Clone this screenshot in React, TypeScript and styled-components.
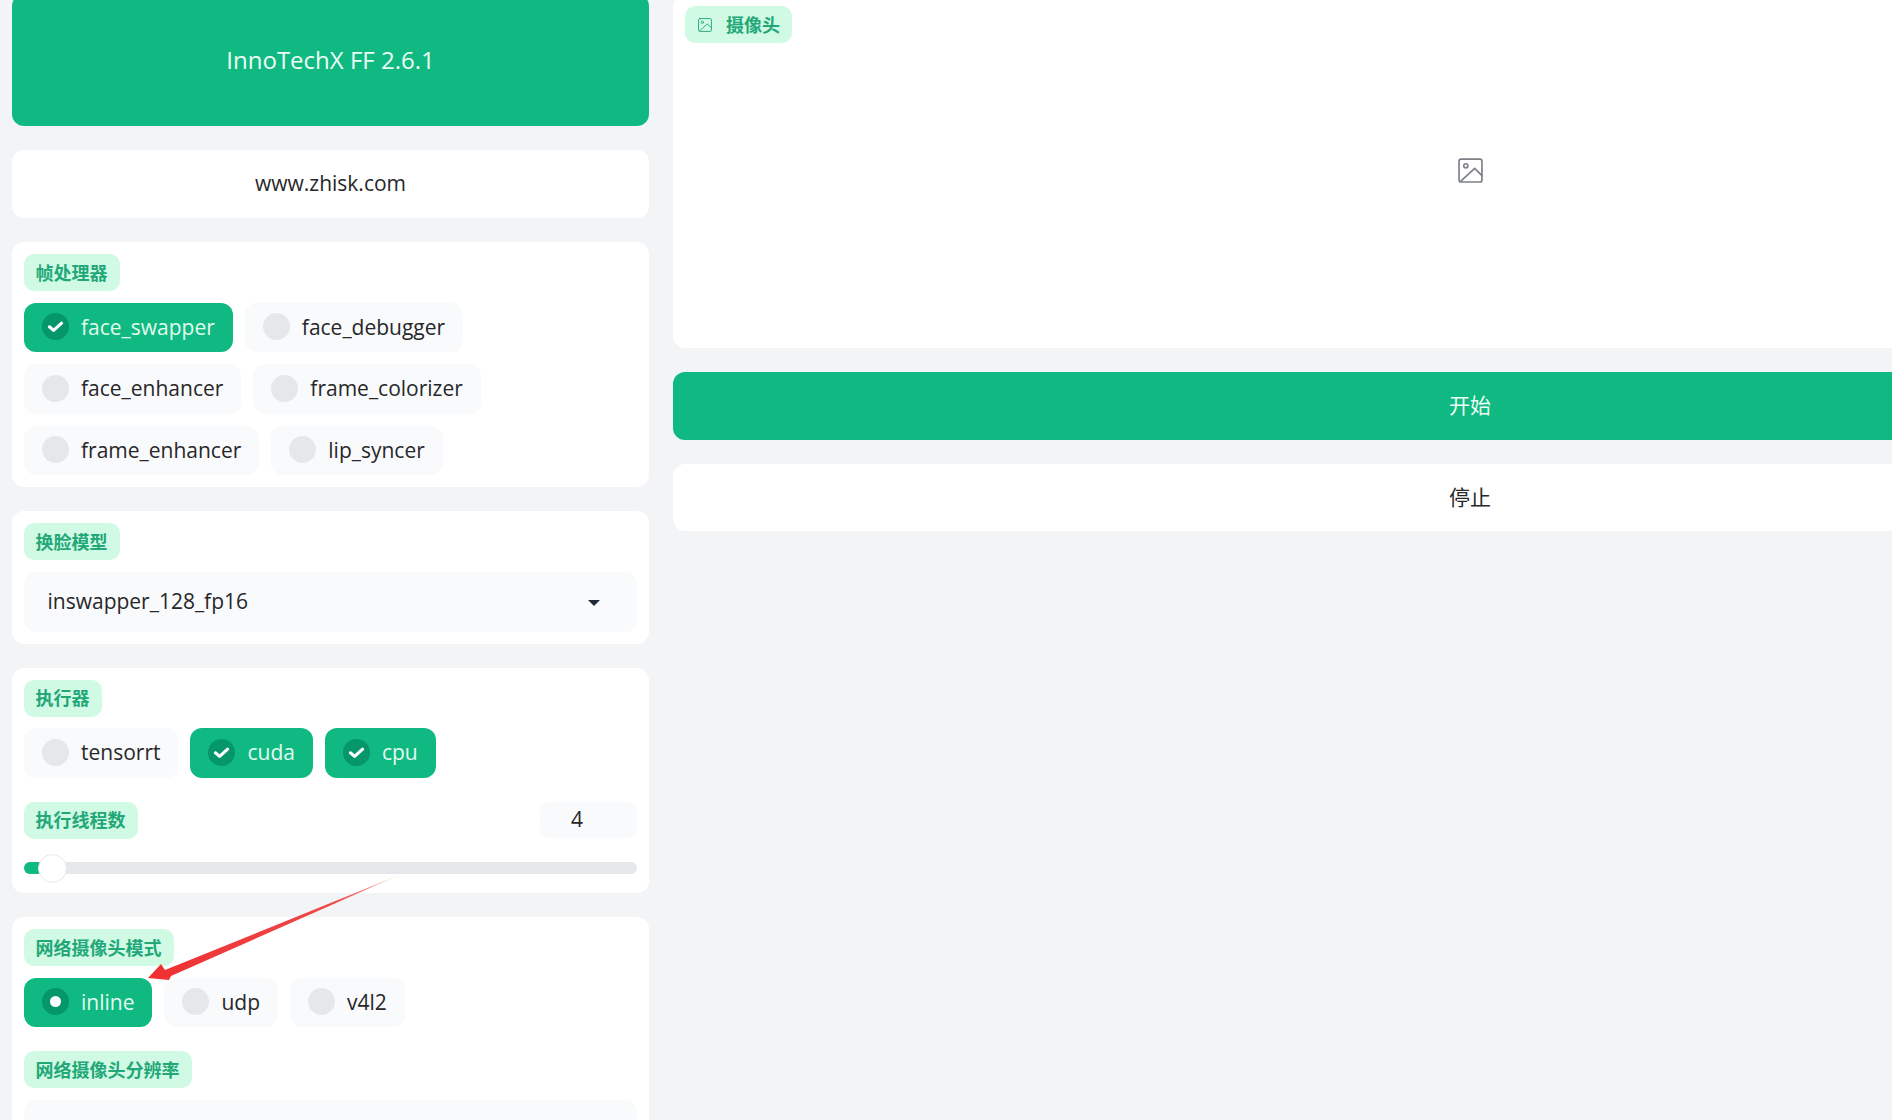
import React from "react";
import styled, { createGlobalStyle } from "styled-components";

const Global = createGlobalStyle`
  html, body { margin: 0; padding: 0; height: 100%; overflow: hidden; background: #f3f4f6; }
  #root { height: 100%; overflow: hidden; }
  * { box-sizing: border-box; }
`;

const Page = styled.div`
  position: relative;
  display: grid;
  grid-template-columns: 637px 1594px;
  gap: 24px;
  align-items: start;
  width: 2267px;
  margin-top: -6px;
  padding: 0 12px;
  font-family: "Open Sans", "Noto Sans CJK SC", sans-serif;
  color: #27272a;
`;

const Column = styled.div`
  display: flex;
  flex-direction: column;
  gap: 24px;
`;

const ActionButton = styled.div<{ $primary?: boolean; $h: number; $size?: number; $lift?: number }>`
  display: flex;
  align-items: center;
  justify-content: center;
  height: ${(p) => p.$h}px;
  padding-bottom: ${(p) => p.$lift ?? 2}px;
  border-radius: 12px;
  background: ${(p) => (p.$primary ? "#10b981" : "#ffffff")};
  color: ${(p) => (p.$primary ? "#ecfdf5" : "#27272a")};
  font-size: ${(p) => p.$size ?? 21}px;
`;

const Panel = styled.section`
  display: flex;
  flex-direction: column;
  align-items: flex-start;
  background: #fff;
  border-radius: 12px;
  padding: 12px;
`;

const Label = styled.span`
  display: inline-flex;
  align-items: center;
  height: 37px;
  padding: 0 12.5px 0 11.5px;
  border-radius: 10px;
  background: #d1fae5;
  color: #22a878;
  font-size: 18px;
  font-weight: 700;
  line-height: 1;
`;

const ChipRow = styled.div`
  display: flex;
  flex-wrap: wrap;
  gap: 12px;
  margin-top: 11.5px;
  width: 100%;
`;

const ChipBox = styled.div<{ $on?: boolean }>`
  display: flex;
  align-items: center;
  gap: 12px;
  height: 49.5px;
  padding: 0 18px 1px;
  border-radius: 12px;
  background: ${(p) => (p.$on ? "#10b981" : "#f9fafb")};
  color: ${(p) => (p.$on ? "#e2fbf0" : "#27272a")};
  font-size: 21px;
`;

const Dot = styled.span<{ $on?: boolean }>`
  display: flex;
  align-items: center;
  justify-content: center;
  width: 27px;
  height: 27px;
  border-radius: 50%;
  background: ${(p) => (p.$on ? "#059669" : "#e5e7eb")};
`;

const RadioCenter = styled.span`
  width: 11px;
  height: 11px;
  border-radius: 50%;
  background: #fff;
`;

const Select = styled.div`
  display: flex;
  align-items: center;
  justify-content: space-between;
  width: 100%;
  height: 60px;
  margin-top: 11.5px;
  padding: 0 36px 2px 23.5px;
  border-radius: 12px;
  background: #f9fafb;
  font-size: 21px;
`;

const Caret = styled.span`
  width: 0;
  height: 0;
  margin: 5px 1px 0 0;
  border-left: 6px solid transparent;
  border-right: 6px solid transparent;
  border-top: 6px solid #1f2937;
`;

const SliderHead = styled.div`
  display: flex;
  justify-content: space-between;
  align-items: flex-start;
  width: 100%;
  margin-top: 24px;
`;

const NumberBox = styled.div`
  width: 97px;
  height: 36px;
  padding: 0 0 2px 31px;
  display: flex;
  align-items: center;
  border-radius: 10px;
  background: #f9fafb;
  font-size: 21px;
`;

const Track = styled.div`
  position: relative;
  width: 100%;
  height: 12px;
  margin: 23.5px 0 7px;
  border-radius: 6px;
  background: #e5e7eb;
`;

const Fill = styled.div`
  width: 28px;
  height: 100%;
  border-radius: 6px 0 0 6px;
  background: #10b981;
`;

const Thumb = styled.div`
  position: absolute;
  left: 14px;
  top: -8.5px;
  width: 29px;
  height: 29px;
  border-radius: 50%;
  background: #fff;
  border: 1px solid #e5e7eb;
`;

const SecondLabel = styled.div`
  margin-top: 24px;
`;

const Camera = styled.section`
  position: relative;
  display: flex;
  align-items: center;
  justify-content: center;
  height: 354px;
  padding-bottom: 1px;
  border-radius: 12px;
  background: #fff;
`;

const CameraLabel = styled(Label)`
  position: absolute;
  top: 12px;
  left: 12px;
  gap: 14px;
  padding: 0 12px 0 13px;
`;

const ArrowLayer = styled.svg`
  position: absolute;
  left: 0;
  top: 6px;
  width: 660px;
  height: 1120px;
  pointer-events: none;
`;

const Check = () => (
  <svg width="17" height="17" viewBox="0 0 17 17" fill="none">
    <path d="M2.4 8.8 L6.6 12.4 L14.6 5.2" stroke="#fff" strokeWidth="3.1" strokeLinecap="round" strokeLinejoin="round" />
  </svg>
);

const Chip = ({ text, on, radio }: { text: string; on?: boolean; radio?: boolean }) => (
  <ChipBox $on={on}>
    <Dot $on={on}>{on && (radio ? <RadioCenter /> : <Check />)}</Dot>
    {text}
  </ChipBox>
);

const ImageIcon = ({ size, color }: { size: number; color: string }) => (
  <svg width={size} height={size} viewBox="0 0 24 24" fill="none" stroke={color} strokeWidth="1.6" strokeLinecap="round" strokeLinejoin="round">
    <rect x="1" y="1" width="22" height="22" rx="2" />
    <circle cx="7.5" cy="7.5" r="2" />
    <path d="M3 22 L16 10 L23 17" />
  </svg>
);

export default function App() {
  return (
    <>
      <Global />
      <Page>
        <Column>
          <ActionButton $primary $h={132} $size={24}>InnoTechX FF 2.6.1</ActionButton>
          <ActionButton $h={68}>www.zhisk.com</ActionButton>
          <Panel>
            <Label>帧处理器</Label>
            <ChipRow>
              <Chip text="face_swapper" on />
              <Chip text="face_debugger" />
              <Chip text="face_enhancer" />
              <Chip text="frame_colorizer" />
              <Chip text="frame_enhancer" />
              <Chip text="lip_syncer" />
            </ChipRow>
          </Panel>
          <Panel>
            <Label>换脸模型</Label>
            <Select>
              inswapper_128_fp16
              <Caret />
            </Select>
          </Panel>
          <Panel>
            <Label>执行器</Label>
            <ChipRow>
              <Chip text="tensorrt" />
              <Chip text="cuda" on />
              <Chip text="cpu" on />
            </ChipRow>
            <SliderHead>
              <Label>执行线程数</Label>
              <NumberBox>4</NumberBox>
            </SliderHead>
            <Track>
              <Fill />
              <Thumb />
            </Track>
          </Panel>
          <Panel>
            <Label>网络摄像头模式</Label>
            <ChipRow>
              <Chip text="inline" on radio />
              <Chip text="udp" />
              <Chip text="v4l2" />
            </ChipRow>
            <SecondLabel>
              <Label>网络摄像头分辨率</Label>
            </SecondLabel>
            <Select />
          </Panel>
        </Column>
        <Column>
          <Camera>
            <CameraLabel>
              <ImageIcon size={14} color="#22a878" />
              摄像头
            </CameraLabel>
            <ImageIcon size={25} color="#7d8187" />
          </Camera>
          <ActionButton $primary $h={68} $lift={4}>开始</ActionButton>
          <ActionButton $h={67} $lift={4}>停止</ActionButton>
        </Column>
        <ArrowLayer viewBox="0 0 660 1120">
          <defs>
            <linearGradient id="arrowFade" x1="397" y1="876" x2="148" y2="978" gradientUnits="userSpaceOnUse">
              <stop offset="0" stopColor="#f4b6b6" />
              <stop offset="0.25" stopColor="#ee4a4a" />
              <stop offset="1" stopColor="#ef2f32" />
            </linearGradient>
          </defs>
          <polygon points="148,978 161,964 165,970 397,876 171,976 169,980" fill="url(#arrowFade)" />
        </ArrowLayer>
      </Page>
    </>
  );
}
